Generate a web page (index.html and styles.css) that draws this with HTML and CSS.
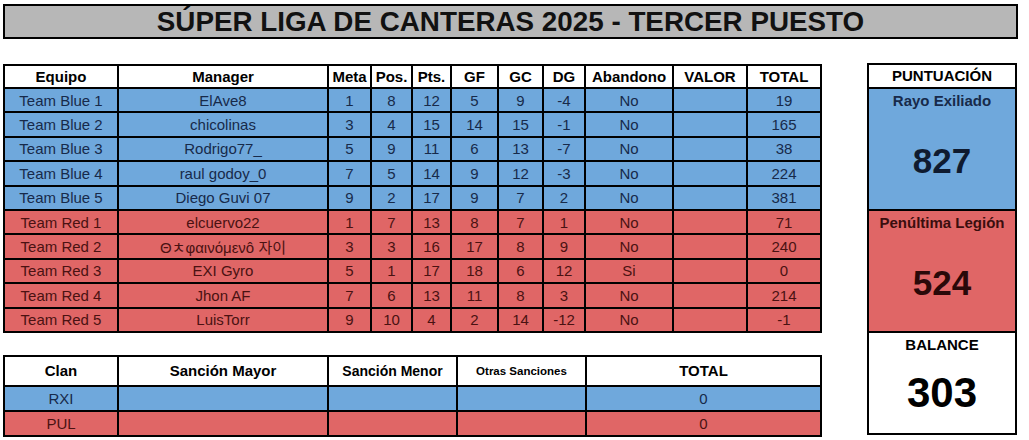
FILE: index.html
```html
<!DOCTYPE html>
<html lang="es">
<head>
<meta charset="utf-8">
<title>Súper Liga de Canteras 2025 - Tercer Puesto</title>
<link rel="stylesheet" href="styles.css">
</head>
<body>
<div class="page">
  <h1 class="title">SÚPER LIGA DE CANTERAS 2025 - TERCER PUESTO</h1>
  <div class="main">
    <div class="left">
      <table class="standings">
        <colgroup>
          <col class="c-team"><col class="c-manager"><col class="c-meta"><col class="c-pos"><col class="c-pts"><col class="c-gf"><col class="c-gc"><col class="c-dg"><col class="c-ab"><col class="c-valor"><col class="c-total">
        </colgroup>
        <thead>
          <tr><th>Equipo</th><th>Manager</th><th>Meta</th><th>Pos.</th><th>Pts.</th><th>GF</th><th>GC</th><th>DG</th><th>Abandono</th><th>VALOR</th><th>TOTAL</th></tr>
        </thead>
        <tbody>
          <tr class="blue"><td>Team Blue 1</td><td>ElAve8</td><td>1</td><td>8</td><td>12</td><td>5</td><td>9</td><td>-4</td><td>No</td><td></td><td>19</td></tr>
          <tr class="blue"><td>Team Blue 2</td><td>chicolinas</td><td>3</td><td>4</td><td>15</td><td>14</td><td>15</td><td>-1</td><td>No</td><td></td><td>165</td></tr>
          <tr class="blue"><td>Team Blue 3</td><td>Rodrigo77_</td><td>5</td><td>9</td><td>11</td><td>6</td><td>13</td><td>-7</td><td>No</td><td></td><td>38</td></tr>
          <tr class="blue"><td>Team Blue 4</td><td>raul godoy_0</td><td>7</td><td>5</td><td>14</td><td>9</td><td>12</td><td>-3</td><td>No</td><td></td><td>224</td></tr>
          <tr class="blue"><td>Team Blue 5</td><td>Diego Guvi 07</td><td>9</td><td>2</td><td>17</td><td>9</td><td>7</td><td>2</td><td>No</td><td></td><td>381</td></tr>
          <tr class="red"><td>Team Red 1</td><td>elcuervo22</td><td>1</td><td>7</td><td>13</td><td>8</td><td>7</td><td>1</td><td>No</td><td></td><td>71</td></tr>
          <tr class="red"><td>Team Red 2</td><td>Θㅊφαινόμενô 자이</td><td>3</td><td>3</td><td>16</td><td>17</td><td>8</td><td>9</td><td>No</td><td></td><td>240</td></tr>
          <tr class="red"><td>Team Red 3</td><td>EXI Gyro</td><td>5</td><td>1</td><td>17</td><td>18</td><td>6</td><td>12</td><td>Si</td><td></td><td>0</td></tr>
          <tr class="red"><td>Team Red 4</td><td>Jhon AF</td><td>7</td><td>6</td><td>13</td><td>11</td><td>8</td><td>3</td><td>No</td><td></td><td>214</td></tr>
          <tr class="red"><td>Team Red 5</td><td>LuisTorr</td><td>9</td><td>10</td><td>4</td><td>2</td><td>14</td><td>-12</td><td>No</td><td></td><td>-1</td></tr>
        </tbody>
      </table>

      <table class="sanctions">
        <colgroup>
          <col class="c-clan"><col class="c-mayor"><col class="c-menor"><col class="c-otras"><col class="c-stotal">
        </colgroup>
        <thead>
          <tr><th>Clan</th><th>Sanción Mayor</th><th class="h-menor">Sanción Menor</th><th class="h-otras">Otras Sanciones</th><th>TOTAL</th></tr>
        </thead>
        <tbody>
          <tr class="blue"><td>RXI</td><td></td><td></td><td></td><td>0</td></tr>
          <tr class="red"><td>PUL</td><td></td><td></td><td></td><td>0</td></tr>
        </tbody>
      </table>
    </div>

    <aside class="score">
      <div class="score-head">PUNTUACIÓN</div>
      <div class="score-team score-blue">
        <div class="score-label">Rayo Exiliado</div>
        <div class="score-value">827</div>
      </div>
      <div class="score-team score-red">
        <div class="score-label">Penúltima Legión</div>
        <div class="score-value">524</div>
      </div>
      <div class="score-team score-balance">
        <div class="score-label">BALANCE</div>
        <div class="score-value">303</div>
      </div>
    </aside>
  </div>
</div>
</body>
</html>
```

FILE: styles.css
```css
* {
  box-sizing: border-box;
}

body {
  margin: 0;
  background: #ffffff;
  color: #000000;
  font-family: "Liberation Sans", Arial, "Noto Sans CJK KR", sans-serif;
}

.page {
  width: 1029px;
  padding: 4px 0 0 3px;
}

.title {
  margin: 0;
  width: 1015px;
  height: 35px;
  border: 2px solid #000;
  background: #b7b7b7;
  color: #111;
  font-size: 27.8px;
  font-weight: bold;
  line-height: 31px;
  text-align: center;
}

.main {
  display: flex;
  align-items: flex-start;
  gap: 45px;
  margin-top: 24px;
}

.left {
  display: flex;
  flex-direction: column;
  gap: 22px;
  width: 819px;
  padding-top: 1px;
}

table {
  width: 819px;
  table-layout: fixed;
  border-collapse: separate;
  border-spacing: 0;
  border-top: 2px solid #000;
  border-left: 2px solid #000;
}

th,
td {
  padding: 0;
  border-right: 2px solid #000;
  border-bottom: 2px solid #000;
  font-size: 15px;
  text-align: center;
  white-space: nowrap;
  overflow: hidden;
}

th {
  background: #fff;
  font-weight: bold;
  color: #000;
}

.standings th {
  height: 23px;
}

.standings td {
  height: 24.4px;
}

.c-team { width: 114px; }
.c-manager { width: 210px; }
.c-meta { width: 43px; }
.c-pos { width: 41px; }
.c-pts { width: 39px; }
.c-gf { width: 47px; }
.c-gc { width: 45px; }
.c-dg { width: 42px; }
.c-ab { width: 88px; }
.c-valor { width: 74px; }
.c-total { width: 74px; }

.c-clan { width: 114px; }
.c-mayor { width: 210px; }
.c-menor { width: 129px; }
.c-otras { width: 129px; }
.c-stotal { width: 235px; }

.blue td {
  background: #6fa8dc;
  color: #172a4a;
}

.red td {
  background: #e06666;
  color: #4a1212;
}

.sanctions th {
  height: 30px;
}

.sanctions td {
  height: 25px;
}

.sanctions .h-menor {
  font-size: 14px;
}

.sanctions .h-otras {
  font-size: 11.5px;
}

.score {
  display: flex;
  flex-direction: column;
  width: 150px;
  border: 2px solid #000;
}

.score-head {
  height: 24px;
  border-bottom: 2px solid #000;
  font-size: 15px;
  font-weight: bold;
  line-height: 22px;
  text-align: center;
}

.score-team {
  display: flex;
  flex-direction: column;
  height: 122px;
  border-bottom: 2px solid #000;
  text-align: center;
}

.score-label {
  font-size: 15px;
  font-weight: bold;
  line-height: 24px;
}

.score-value {
  flex: 1;
  display: flex;
  align-items: center;
  justify-content: center;
  font-size: 35px;
  font-weight: bold;
}

.score-blue {
  background: #6fa8dc;
  color: #0f1b30;
}

.score-blue .score-label {
  color: #172a4a;
}

.score-red {
  background: #e06666;
  color: #2a0909;
}

.score-red .score-label {
  color: #3a0e0e;
}

.score-balance {
  height: 100px;
  border-bottom: none;
  background: #fff;
  color: #000;
}

.score-balance .score-value {
  font-size: 42px;
  padding-bottom: 4px;
}
```
